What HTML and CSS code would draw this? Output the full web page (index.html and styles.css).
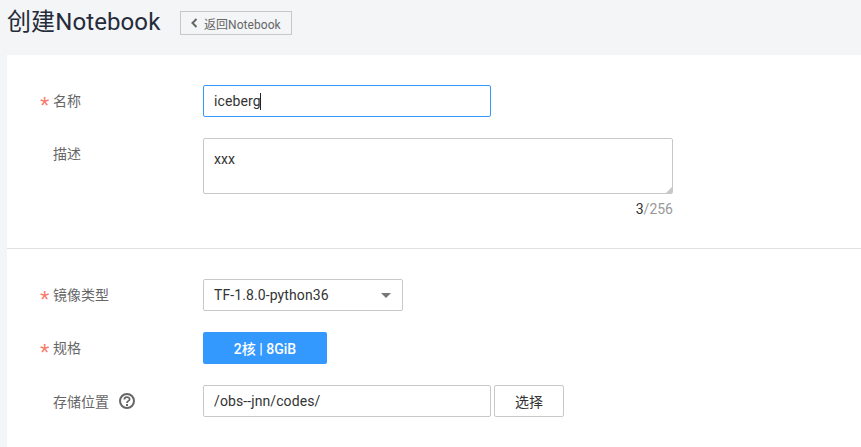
FILE: index.html
```html
<!DOCTYPE html>
<html lang="en">
<head>
    <meta charset="UTF-8">
    <meta name="viewport" content="width=device-width, initial-scale=1.0">
    <title>创建Notebook</title>
    <link rel="stylesheet" href="styles.css">
</head>
<body>
    <div class="page-header">
        <h1 class="page-title">创建Notebook</h1>
        <button class="back-btn">
            <svg class="back-icon" width="7" height="10" viewBox="0 0 7 10"><path d="M5.5 1 L1.5 5 L5.5 9" fill="none" stroke="#666" stroke-width="2"/></svg>
            返回Notebook
        </button>
    </div>

    <div class="card">
        <div class="section section-basic">
            <div class="form-row row-name">
                <label class="form-label required">名称</label>
                <div class="text-box text-box-focus box-md"><span>iceberg</span><i class="caret"></i></div>
            </div>
            <div class="form-row row-desc">
                <label class="form-label label-desc">描述</label>
                <div class="field-wrap">
                    <div class="text-area">xxx<i class="resize-grip"></i></div>
                    <div class="counter"><b>3</b>/256</div>
                </div>
            </div>
        </div>

        <div class="section section-config">
            <div class="form-row">
                <label class="form-label required">镜像类型</label>
                <div class="text-box box-select"><span>TF-1.8.0-python36</span><i class="select-arrow"></i></div>
            </div>
            <div class="form-row">
                <label class="form-label required">规格</label>
                <button class="spec-btn">2核 | 8GiB</button>
            </div>
            <div class="form-row">
                <label class="form-label">存储位置
                    <svg class="help-icon" width="16" height="16" viewBox="0 0 16 16">
                        <circle cx="8" cy="8" r="7" fill="none" stroke="#666" stroke-width="2"/>
                        <path d="M5.4 6.4 C5.4 3.4 10.6 3.4 10.6 6.2 C10.6 8 8 7.8 8 10" fill="none" stroke="#666" stroke-width="1.8"/>
                        <rect x="7" y="11" width="2" height="2" fill="#666"/>
                    </svg>
                </label>
                <div class="text-box box-md"><span>/obs--jnn/codes/</span></div>
                <button class="pick-btn">选择</button>
            </div>
        </div>
    </div>
</body>
</html>
```
FILE: styles.css
```css
* {
    box-sizing: border-box;
}

html,
body {
    height: 100%;
}

body {
    margin: 0;
    padding: 0;
    display: flex;
    flex-direction: column;
    overflow: hidden;
    background: #f3f5f7;
    color: #333;
    font-family: Roboto, "Noto Sans CJK SC", sans-serif;
    font-size: 14px;
}

.page-header {
    height: 55px;
    flex-shrink: 0;
    display: flex;
    align-items: flex-start;
    padding: 11px 0 0 7px;
}

.page-title {
    margin: -3px 20px 0 0;
    font-size: 24px;
    font-weight: 400;
    line-height: 28px;
    letter-spacing: 0.1px;
    color: #252b3a;
    width: 153px;
    white-space: nowrap;
}

.back-btn {
    height: 24px;
    width: 112px;
    display: flex;
    align-items: center;
    padding: 0 0 0 10px;
    background: #f3f5f7;
    border: 1px solid #c8c8c8;
    color: #666;
    font-family: inherit;
    font-size: 12px;
    letter-spacing: 0.05px;
    white-space: nowrap;
}

.back-icon {
    margin-right: 6px;
}

.card {
    flex: 1;
    margin-left: 7px;
    background: #fff;
}

.section-basic {
    padding-top: 30px;
    height: 194px;
    border-bottom: 1px solid #e2e2e2;
}

.section-config {
    padding-top: 30px;
}

.form-row {
    display: flex;
    align-items: center;
    margin-bottom: 21px;
}

.row-desc {
    align-items: flex-start;
}

.form-label {
    position: relative;
    width: 196px;
    padding-left: 46px;
    flex-shrink: 0;
    color: #666;
    display: flex;
    align-items: center;
    white-space: nowrap;
}

.label-desc {
    line-height: 32px;
}

.required {
    padding-bottom: 2px;
}

.required::before {
    content: "*";
    position: absolute;
    left: 33px;
    top: 6px;
    color: #fa7b6e;
    font-family: "Liberation Sans", sans-serif;
    font-size: 24px;
    line-height: 20px;
}

.help-icon {
    margin-left: 10px;
}

.text-box {
    height: 32px;
    display: flex;
    align-items: center;
    padding: 0 10px;
    background: #fff;
    border: 1px solid #c8c8c8;
    border-radius: 2px;
    color: #333;
    letter-spacing: 0.1px;
}

.box-md {
    width: 288px;
}

.box-select {
    width: 200px;
    justify-content: space-between;
    padding-right: 11px;
}

.text-box-focus {
    justify-content: flex-start;
    border-color: #3399ff;
}

.caret {
    width: 1px;
    height: 17px;
    margin-left: -1px;
    background: #222;
}

.select-arrow {
    width: 0;
    height: 0;
    border-left: 5px solid transparent;
    border-right: 5px solid transparent;
    border-top: 5px solid #777;
}

.field-wrap {
    width: 470px;
}

.text-area {
    position: relative;
    height: 56px;
    padding: 12px 10px;
    background: #fff;
    border: 1px solid #c8c8c8;
    border-radius: 2px;
    line-height: 16px;
}

.resize-grip {
    position: absolute;
    right: 0;
    bottom: 0;
    width: 0;
    height: 0;
    border-left: 6px solid transparent;
    border-bottom: 6px solid #c8c8c8;
}

.counter {
    margin-top: 7px;
    text-align: right;
    line-height: 16px;
    color: #999;
}

.counter b {
    font-weight: 400;
    color: #333;
}

.spec-btn {
    width: 124px;
    height: 32px;
    background: #3399ff;
    border: none;
    border-radius: 2px;
    color: #fff;
    font-family: inherit;
    font-size: 14px;
    font-weight: 500;
}

.pick-btn {
    width: 70px;
    height: 32px;
    margin-left: 3px;
    background: #fff;
    border: 1px solid #c8c8c8;
    border-radius: 2px;
    color: #333;
    font-family: inherit;
    font-size: 14px;
}
```
